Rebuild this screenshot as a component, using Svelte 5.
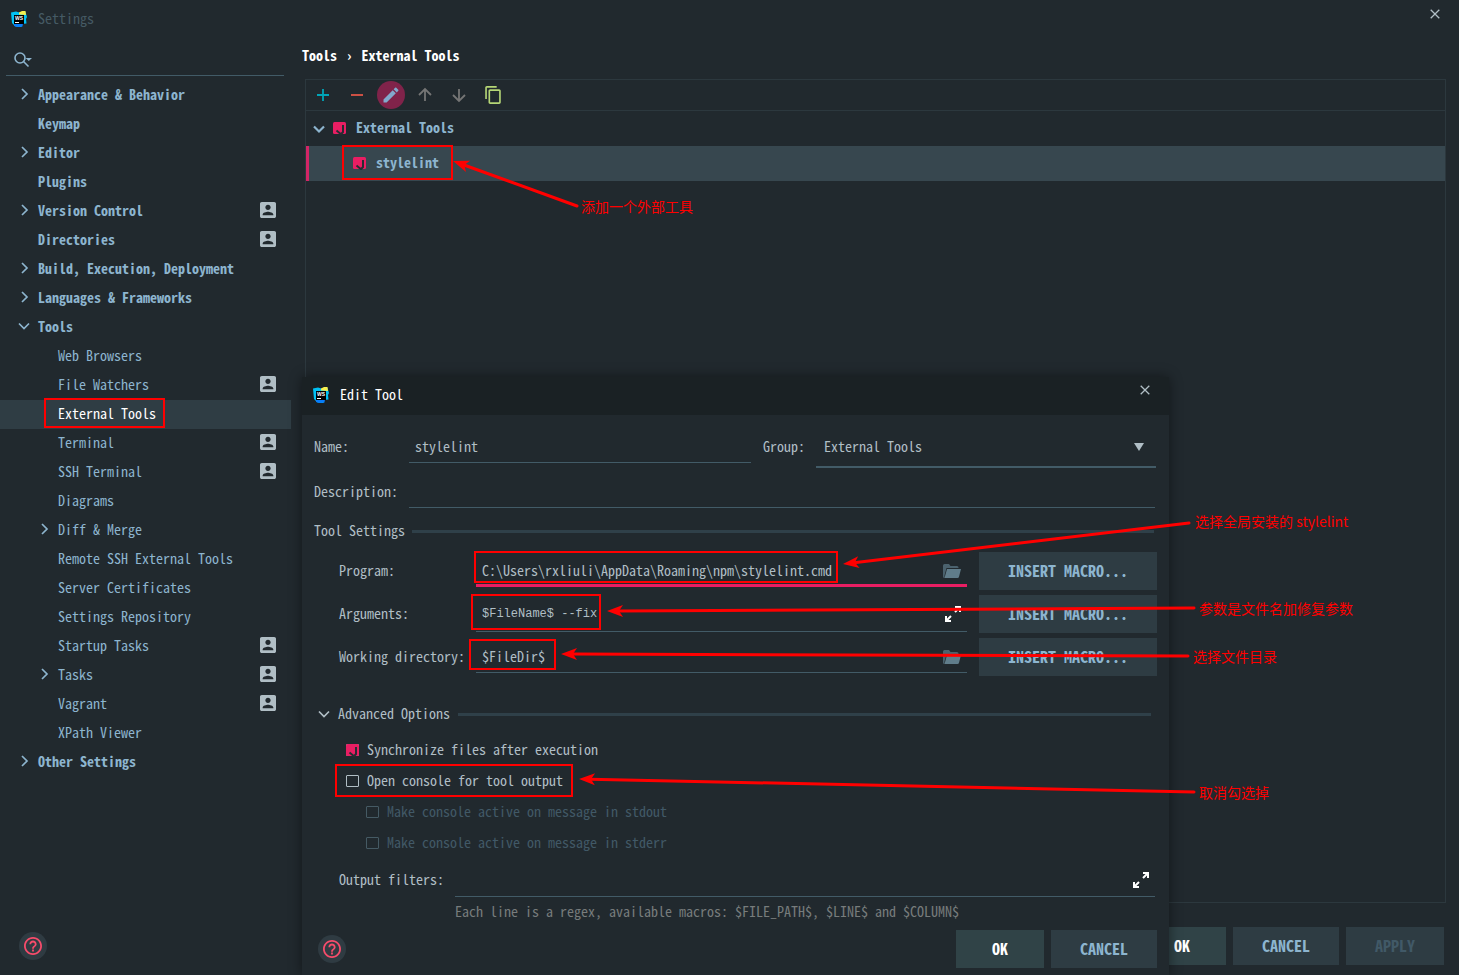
<script>
  // Sidebar tree. level 0 rows are bold, `open` undefined means no arrow,
  // `project` shows the per-project badge on the right.
  const pages = [
    { label: 'Appearance & Behavior', level: 0, open: false },
    { label: 'Keymap', level: 0 },
    { label: 'Editor', level: 0, open: false },
    { label: 'Plugins', level: 0 },
    { label: 'Version Control', level: 0, open: false, project: true },
    { label: 'Directories', level: 0, project: true },
    { label: 'Build, Execution, Deployment', level: 0, open: false },
    { label: 'Languages & Frameworks', level: 0, open: false },
    { label: 'Tools', level: 0, open: true },
    { label: 'Web Browsers', level: 1 },
    { label: 'File Watchers', level: 1, project: true },
    { label: 'External Tools', level: 1 },
    { label: 'Terminal', level: 1, project: true },
    { label: 'SSH Terminal', level: 1, project: true },
    { label: 'Diagrams', level: 1 },
    { label: 'Diff & Merge', level: 1, open: false },
    { label: 'Remote SSH External Tools', level: 1 },
    { label: 'Server Certificates', level: 1 },
    { label: 'Settings Repository', level: 1 },
    { label: 'Startup Tasks', level: 1, project: true },
    { label: 'Tasks', level: 1, open: false, project: true },
    { label: 'Vagrant', level: 1, project: true },
    { label: 'XPath Viewer', level: 1 },
    { label: 'Other Settings', level: 0, open: false }
  ]

  let current = $state('External Tools')
  let query = $state('')

  let tool = $state({
    name: 'stylelint',
    group: 'External Tools',
    description: '',
    program: 'C:\\Users\\rxliuli\\AppData\\Roaming\\npm\\stylelint.cmd',
    args: '$FileName$ --fix',
    dir: '$FileDir$',
    sync: true,
    console: false,
    stdout: false,
    stderr: false,
    filters: ''
  })

  // Notes drawn on top of the windows: [x, y, width, height]
  const boxes = [
    [45, 399, 119, 28],
    [343, 146, 109, 33],
    [475, 552, 362, 30],
    [472, 595, 128, 34],
    [470, 640, 85, 29],
    [336, 765, 236, 31]
  ]
  const notes = [
    { from: [577, 206], to: [453, 161], x: 581, y: 212, text: '添加一个外部工具' },
    { from: [1189, 523], to: [843, 564], x: 1195, y: 527, text: '选择全局安装的 stylelint' },
    { from: [1194, 608], to: [607, 611], x: 1199, y: 614, text: '参数是文件名加修复参数' },
    { from: [1188, 656], to: [561, 654], x: 1193, y: 662, text: '选择文件目录' },
    { from: [1194, 792], to: [579, 779], x: 1199, y: 798, text: '取消勾选掉' }
  ]

  // Stop the line inside the arrow head so the tip stays sharp
  function shaftEnd({ from, to }) {
    const dx = from[0] - to[0]
    const dy = from[1] - to[1]
    const len = Math.hypot(dx, dy)
    return [to[0] + (dx / len) * 11, to[1] + (dy / len) * 11]
  }
  function angle({ from, to }) {
    return (Math.atan2(to[1] - from[1], to[0] - from[0]) * 180) / Math.PI
  }
</script>

{#snippet logo()}
  <svg class="logo" viewBox="0 0 16 16" aria-hidden="true">
    <path fill="#00c2f5" d="M0 1.500 5 .5l5 1.500 4.500-1L16 6l-1 2 .5 4.500-4.500.5-.5 3-6-.5L1 12z" />
    <path fill="#f6f04f" d="M8 1.500 11 0h3.500l.5 4-7-.5z" />
    <path fill="#087cfa" d="M3 12h9l-.5 3.500-5 .5L3 15z" />
    <rect x="3" y="4" width="10" height="9" fill="#000" />
    <text x="4" y="9" font-size="5" font-weight="700" fill="#fff" font-family="Liberation Sans, sans-serif">WS</text>
    <rect x="4" y="11" width="4" height="1" fill="#fff" />
  </svg>
{/snippet}

{#snippet chevron(open)}
  <svg class="chevron" viewBox="0 0 12 12" aria-hidden="true">
    <path d={open ? 'M1 3.500 6 8.500 11 3.500' : 'M4 1 9 6 4 11'} />
  </svg>
{/snippet}

{#snippet cross()}
  <svg class="cross" viewBox="0 0 10 10" aria-hidden="true"><path d="M.7.7 9.300 9.300M9.300.7.7 9.300" /></svg>
{/snippet}

{#snippet help()}
  <button class="help" aria-label="Help">
    <svg viewBox="2 2 20 20" aria-hidden="true">
      <path d="M11 18h2v-2h-2v2zm1-16C6.480 2 2 6.480 2 12s4.480 10 10 10 10-4.480 10-10S17.520 2 12 2zm0 18c-4.410 0-8-3.590-8-8s3.590-8 8-8 8 3.590 8 8-3.590 8-8 8zm0-14c-2.210 0-4 1.790-4 4h2c0-1.100.9-2 2-2s2 .9 2 2c0 2-3 1.750-3 5h2c0-2.250 3-2.500 3-5 0-2.210-1.790-4-4-4z" />
    </svg>
  </button>
{/snippet}

{#snippet folder()}
  <button class="inside" aria-label="Browse">
    <svg class="folder" viewBox="0 0 18 14" aria-hidden="true">
      <path fill="#4b626e" d="M1.500 0H6l1.500 2H14q1.500 0 1.500 1.500V4H3.500L1.500 11.500V14Q0 14 0 12.500v-11Q0 0 1.500 0z" />
      <path fill="#607d8b" d="M4 5h14l-2 7.800Q15.700 14 14.500 14H1.500z" />
    </svg>
  </button>
{/snippet}

{#snippet expand()}
  <button class="inside" aria-label="Expand">
    <svg class="expand" viewBox="0 0 16 16" aria-hidden="true">
      <path d="M10 1h5v5M15 1 10 6M6 15H1v-5M1 15l5-5" />
    </svg>
  </button>
{/snippet}

{#snippet tick()}
  <svg class="tick" viewBox="0 0 13 13" aria-hidden="true">
    <rect width="13" height="12" rx="1.500" fill="#e91e63" />
    <path d="M3.500 8.500 8 12.200 10 10V3" />
  </svg>
{/snippet}

{#snippet check(id, label, nested, disabled)}
  <div class="check" class:nested>
    <span class="box">
      <input type="checkbox" {id} bind:checked={tool[id]} {disabled} />
      {#if tool[id]}{@render tick()}{/if}
    </span>
    <label for={id} class:disabled>{label}</label>
  </div>
{/snippet}

<div class="settings">
  <header class="titlebar">
    {@render logo()}
    <span>Settings</span>
    <button class="close" aria-label="Close settings">{@render cross()}</button>
  </header>

  <div class="content">
    <nav class="sidebar">
      <label class="search">
        <svg viewBox="0 0 18 16" aria-hidden="true">
          <circle cx="6" cy="6" r="5" />
          <path d="m9.500 9.500 5 5" />
          <path class="solid" d="M11.500 6H18l-3.200 3z" />
        </svg>
        <input type="text" aria-label="Search settings" bind:value={query} />
      </label>
      <ul>
        {#each pages as page (page.label)}
          <li>
            <button
              class="page level{page.level}"
              class:selected={page.label === current}
              onclick={() => (current = page.label)}
            >
              <span class="arrow">
                {#if page.open !== undefined}{@render chevron(page.open)}{/if}
              </span>
              <span>{page.label}</span>
              {#if page.project}
                <svg class="project" viewBox="3 3 18 18" aria-hidden="true">
                  <path d="M3 5v14c0 1.100.89 2 2 2h14c1.100 0 2-.9 2-2V5c0-1.100-.9-2-2-2H5c-1.110 0-2 .9-2 2zm12 4c0 1.660-1.340 3-3 3s-3-1.340-3-3 1.340-3 3-3 3 1.340 3 3zm-9 8c0-2 4-3.100 6-3.100s6 1.100 6 3.100v1H6v-1z" />
                </svg>
              {/if}
            </button>
          </li>
        {/each}
      </ul>
    </nav>

    <main>
      <div class="crumbs">
        <span>Tools</span>
        <span>›</span>
        <span>External Tools</span>
      </div>
      <section class="panel">
        <div class="toolbar">
          <button aria-label="Add">
            <svg viewBox="0 0 24 24"><path stroke="#00a5b8" d="M12 4v16M4 12h16" /></svg>
          </button>
          <button aria-label="Remove">
            <svg viewBox="0 0 24 24"><path stroke="#e05548" d="M4 12h16" /></svg>
          </button>
          <button class="active" aria-label="Edit">
            <svg viewBox="0 0 24 24">
              <path fill="#82a9cc" d="M3 17.250V21h3.750L17.810 9.940l-3.750-3.750L3 17.250zM20.710 7.040c.39-.39.39-1.020 0-1.410l-2.340-2.340c-.39-.39-1.020-.39-1.410 0l-1.830 1.830 3.750 3.750 1.830-1.830z" />
            </svg>
          </button>
          <button aria-label="Move up">
            <svg viewBox="0 0 24 24"><path stroke="#757575" d="M12 20V4.500M4 12l8-8 8 8" /></svg>
          </button>
          <button aria-label="Move down">
            <svg viewBox="0 0 24 24"><path stroke="#757575" d="M12 4v15.500M4 12l8 8 8-8" /></svg>
          </button>
          <button aria-label="Copy">
            <svg viewBox="1 1 21 22">
              <path fill="#b5d676" d="M16 1H4c-1.100 0-2 .9-2 2v14h2V3h12V1zm3 4H8c-1.100 0-2 .9-2 2v14c0 1.100.9 2 2 2h11c1.100 0 2-.9 2-2V7c0-1.100-.9-2-2-2zm0 16H8V7h11v14z" />
            </svg>
          </button>
        </div>
        <div class="tool">
          {@render chevron(true)}
          {@render tick()}
          <span>External Tools</span>
        </div>
        <div class="tool child">
          {@render tick()}
          <span>stylelint</span>
        </div>
      </section>
    </main>
  </div>

  <footer>
    {@render help()}
    <button class="btn ok">OK</button>
    <button class="btn cancel">CANCEL</button>
    <button class="btn apply" disabled>APPLY</button>
  </footer>

  <div class="dialog" role="dialog" aria-label="Edit Tool">
    <header>
      {@render logo()}
      <span>Edit Tool</span>
      <button class="close" aria-label="Close dialog">{@render cross()}</button>
    </header>
    <form onsubmit={(e) => e.preventDefault()}>
      <div class="line first">
        <label class="key" for="name">Name:</label>
        <input id="name" type="text" bind:value={tool.name} />
        <label class="group" for="group">Group:</label>
        <div class="select">
          <select id="group" bind:value={tool.group}>
            <option>External Tools</option>
          </select>
          <svg viewBox="0 0 10 8" aria-hidden="true"><path d="M0 0h10L5 8z" /></svg>
        </div>
      </div>
      <div class="line">
        <label class="key" for="description">Description:</label>
        <input id="description" type="text" bind:value={tool.description} />
      </div>

      <h2><span>Tool Settings</span></h2>
      <div class="fields">
        <label for="program">Program:</label>
        <div class="field focused">
          <input id="program" type="text" bind:value={tool.program} />
          {@render folder()}
        </div>
        <button class="btn">INSERT MACRO...</button>
        <label for="args">Arguments:</label>
        <div class="field args">
          <input id="args" type="text" bind:value={tool.args} />
          {@render expand()}
        </div>
        <button class="btn">INSERT MACRO...</button>
        <label for="dir">Working directory:</label>
        <div class="field">
          <input id="dir" type="text" bind:value={tool.dir} />
          {@render folder()}
        </div>
        <button class="btn">INSERT MACRO...</button>
      </div>

      <h2 class="advanced">{@render chevron(true)}<span>Advanced Options</span></h2>
      <div class="checks">
        {@render check('sync', 'Synchronize files after execution', false, false)}
        {@render check('console', 'Open console for tool output', false, false)}
        {@render check('stdout', 'Make console active on message in stdout', true, !tool.console)}
        {@render check('stderr', 'Make console active on message in stderr', true, !tool.console)}
      </div>
      <div class="filters">
        <label for="filters">Output filters:</label>
        <div class="field">
          <input id="filters" type="text" bind:value={tool.filters} />
          {@render expand()}
        </div>
        <p>Each line is a regex, available macros: $FILE_PATH$, $LINE$ and $COLUMN$</p>
      </div>

      <div class="actions">
        {@render help()}
        <button class="btn ok">OK</button>
        <button class="btn cancel">CANCEL</button>
      </div>
    </form>
  </div>

  <svg class="notes">
    {#each boxes as [x, y, width, height]}
      <rect {x} {y} {width} {height} />
    {/each}
    {#each notes as note}
      {@const end = shaftEnd(note)}
      <line x1={note.from[0]} y1={note.from[1]} x2={end[0]} y2={end[1]} />
      <path d="M0 0-16-6-12 0-16 6z" transform="translate({note.to[0]} {note.to[1]}) rotate({angle(note)})" />
      <text x={note.x} y={note.y}>{note.text}</text>
    {/each}
  </svg>
</div>

<style>
  :global(body) {
    margin: 0;
    background: #21292e;
  }
  .settings {
    position: relative;
    display: flex;
    flex-direction: column;
    min-height: 100vh;
    overflow: hidden;
    background: #21292e;
    color: #b0bec5;
    font: 14px/20px "Noto Sans Mono CJK SC", "Liberation Mono", monospace;
  }
  .settings * { box-sizing: border-box; }
  button, input, select { font: inherit; color: inherit; border: 0; padding: 0; margin: 0; background: none; outline: none; }
  button { cursor: pointer; }
  svg { display: block; flex-shrink: 0; }
  ul { list-style: none; margin: 0; padding: 0; }

  .titlebar {
    display: flex; align-items: center; gap: 11px;
    height: 38px; padding: 0 19px 0 11px;
    color: #455a64;
  }
  .titlebar span, .dialog header span { padding-bottom: 2px; }
  .logo { width: 16px; height: 16px; }
  .close { margin: 0 0 10px auto; color: #b0bec5; }
  .cross { width: 10px; height: 10px; stroke: currentColor; stroke-width: 1.3; }
  .chevron { width: 12px; height: 12px; fill: none; stroke: currentColor; stroke-width: 1.7; }

  .content { display: flex; flex: 1; }
  .sidebar { width: 291px; color: #8db5cf; }
  .search {
    display: flex; align-items: center; gap: 6px;
    height: 38px; margin: 0 7px 5px 6px; padding: 7px 0 0 8px;
    border-bottom: 1px solid #425b67;
  }
  .search svg { width: 18px; height: 16px; fill: none; stroke: currentColor; stroke-width: 1.6; }
  .search .solid { fill: currentColor; stroke: none; }
  .search input { flex: 1; min-width: 0; }

  .page {
    display: flex; align-items: center;
    width: 100%; height: 29px; padding: 0 15px 4px 18px;
    text-align: left;
  }
  .page.level0 { font-weight: 700; }
  .page.level1 { padding-left: 38px; }
  .page.selected { background: #2f3d44; color: #fff; }
  .arrow { width: 20px; }
  .project { width: 16px; height: 16px; margin-left: auto; fill: #b0bec5; }

  main { display: flex; flex-direction: column; flex: 1; padding: 0 13px 0 11px; }
  .crumbs {
    display: flex; align-items: center; gap: 10px;
    height: 36px; margin-bottom: 5px; padding-bottom: 2px;
    color: #fff; font-weight: 700;
  }
  .panel { flex: 1; margin-left: 3px; border: 1px solid #2c383e; }
  .toolbar {
    display: flex; align-items: center; gap: 6px;
    height: 31px; padding-left: 3px;
    border-bottom: 1px solid #2c383e;
  }
  .toolbar button {
    display: grid; place-items: center;
    width: 28px; height: 28px; border-radius: 50%;
  }
  .toolbar svg { width: 18px; height: 18px; fill: none; stroke-width: 2.4; overflow: visible; }
  .toolbar .active { background: #80234a; }
  .toolbar .active svg { width: 20px; height: 20px; }
  .tool {
    display: flex; align-items: center; gap: 10px;
    height: 35px; padding-left: 7px;
    color: #8db5cf; font-weight: 700;
  }
  .tool span { padding-bottom: 3px; }
  .tool .chevron { margin-right: -2px; stroke-width: 2.2; }
  .tool.child { padding-left: 44px; background: #37474f; border-left: 3px solid #d22566; }
  .tick { width: 13px; height: 13px; }
  .tick path { fill: none; stroke: #262d33; stroke-width: 2; }

  .help {
    display: grid; place-items: center;
    width: 28px; height: 28px; margin-right: auto;
    border-radius: 50%; background: #2f3b42;
  }
  .help svg { width: 18px; height: 18px; fill: #f64c6b; }
  .btn {
    height: 38px; padding-bottom: 2px;
    background: #2e3c43; color: #8db5cf;
    font-size: 16px; font-weight: 700;
  }
  .btn.ok { width: 88px; background: #304347; color: #fff; }
  .btn.cancel { width: 106px; }
  .btn.apply { width: 98px; color: #415967; }

  footer {
    display: flex; align-items: center; gap: 7px;
    padding: 24px 15px 10px 19px;
  }

  .dialog {
    position: absolute; top: 377px; left: 302px; right: 290px;
    background: #21292e;
    box-shadow: 0 0 12px rgba(0, 0, 0, .45);
  }
  .dialog header {
    display: flex; align-items: center; gap: 11px;
    height: 38px; padding: 0 19px 2px 11px;
    background: #1a2124; color: #fff;
  }
  form { padding: 11px 12px 7px; }
  .line { display: flex; align-items: center; margin: 8px 2px 0 0; }
  .line.first { height: 42px; margin: 0 1px 0 0; }
  .line label { padding-bottom: 2px; }
  .key { width: 95px; }
  .line input {
    flex: 1; min-width: 0; height: 32px; padding: 0 6px 2px;
    border-bottom: 1px solid #425b67;
  }
  .group { width: 53px; margin-left: 12px; }
  .select { position: relative; width: 340px; }
  select {
    appearance: none;
    width: 100%; height: 42px; padding: 0 8px;
    border-bottom: 2px solid #425b67;
  }
  option { background: #21292e; }
  .select svg { position: absolute; top: 17px; right: 12px; width: 10px; height: 8px; fill: #b0bec5; pointer-events: none; }

  h2 {
    display: flex; align-items: center; gap: 7px;
    height: 20px; margin: 13px 3px 11px 0;
    font-size: 14px; font-weight: 400;
  }
  h2 span { padding-bottom: 2px; }
  h2::after { content: ""; flex: 1; height: 3px; background: #2f4049; }
  h2.advanced { gap: 8px; margin: 28px 6px 11px 4px; }

  .fields {
    display: grid; grid-template-columns: 137px 1fr 178px; gap: 5px 0;
    padding-left: 25px;
  }
  .fields label { line-height: 36px; }
  .field {
    display: flex; align-items: center;
    height: 35px; margin-right: 12px; padding: 3px 6px 0;
    box-shadow: inset 0 -1px #425b67;
  }
  .field.focused { box-shadow: inset 0 -3px #e91e63; }
  .field.args { height: 37px; padding-top: 1px; }
  .field input { flex: 1; min-width: 0; padding-bottom: 2px; }
  .field.args input { padding-bottom: 0; font-family: "Liberation Mono", monospace; font-size: 12px; }
  .folder { width: 18px; height: 14px; }
  .expand { width: 16px; height: 16px; fill: none; stroke: #fff; stroke-width: 2; }

  .check { display: flex; align-items: center; gap: 8px; height: 31px; padding-left: 32px; }
  .check.nested { padding-left: 52px; }
  .check label { padding-bottom: 3px; }
  .box { position: relative; width: 13px; height: 13px; }
  .box input {
    appearance: none; display: block;
    width: 13px; height: 12px;
    border: 1px solid #b0bec5; border-radius: 1px;
  }
  .box input:disabled { border-color: #455a64; }
  .box .tick { position: absolute; top: 0; left: 0; pointer-events: none; }
  label.disabled { color: #415967; }

  .filters { display: grid; grid-template-columns: 116px 1fr; margin-top: 4px; padding-left: 25px; }
  .filters label { line-height: 32px; }
  .filters .field { height: 34px; margin-right: 2px; padding-top: 0; }
  .filters p { grid-column: 2; margin: 4px 0 0; color: #777c7c; }

  .actions { display: flex; align-items: center; gap: 7px; margin-top: 9px; padding-left: 4px; }

  .notes {
    position: absolute; top: 0; left: 0; width: 100%; height: 100%;
    pointer-events: none;
  }
  .notes rect { fill: none; stroke: #f00; stroke-width: 2; }
  .notes line { stroke: #f00; stroke-width: 3; stroke-linecap: round; }
  .notes path { fill: #f00; }
  .notes text { fill: #f00; font: 14px "Noto Sans CJK SC", sans-serif; }
</style>
